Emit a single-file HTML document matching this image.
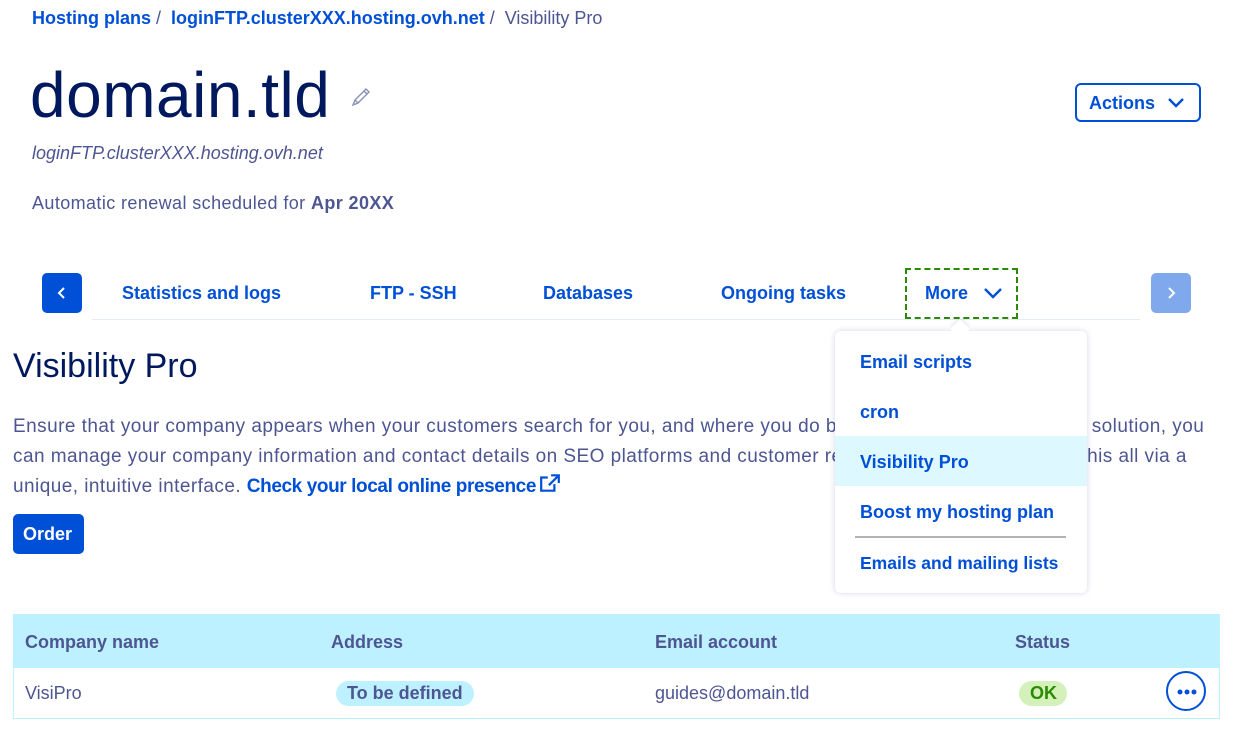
<!DOCTYPE html>
<html><head><meta charset="utf-8"><style>
*{margin:0;padding:0;box-sizing:border-box}
body{width:1233px;height:734px;background:#fff;font-family:"Liberation Sans",sans-serif;position:relative;overflow:hidden;color:#4d5592}
.a{position:absolute;white-space:nowrap}
.b{color:#0050d7;font-weight:bold}
.tab{position:absolute;top:283px;font-size:18px;font-weight:bold;color:#0050d7}
.mi{position:absolute;left:25px;font-size:18px;font-weight:bold;color:#0050d7}
.th{position:absolute;top:632px;font-size:18px;font-weight:bold;color:#4d5592}
</style></head><body>
<div class="a" style="left:32px;top:8px;font-size:18px"><span class="b">Hosting plans</span> / &nbsp;<span class="b">loginFTP.clusterXXX.hosting.ovh.net</span> / &nbsp;Visibility Pro</div>
<div class="a" style="left:30px;top:58px;font-size:64px;color:#00185e;letter-spacing:0.5px;font-weight:300">domain.tld</div>
<svg class="a" style="left:350px;top:86px" width="22" height="22" viewBox="0 0 22 22"><path d="M3 19 L5 14 L16 3 L19 6 L8 17 Z M5 14 L8 17 M14 5 L17 8" fill="none" stroke="#8a8fb8" stroke-width="1.4"/></svg>
<div class="a" style="left:32px;top:143px;font-size:18px;font-style:italic">loginFTP.clusterXXX.hosting.ovh.net</div>
<div class="a" style="left:32px;top:193px;font-size:18px;letter-spacing:0.4px">Automatic renewal scheduled for <b>Apr 20XX</b></div>
<div class="a" style="left:1075px;top:83px;width:126px;height:39px;border:2px solid #0050d7;border-radius:6px;color:#0050d7;font-weight:bold;font-size:18px;padding:8px 0 0 12px">Actions
<svg style="position:absolute;left:90px;top:12px" width="18" height="12" viewBox="0 0 18 12"><path d="M2 2 L9 9 L16 2" fill="none" stroke="#0050d7" stroke-width="2.4"/></svg></div>
<div class="a" style="left:42px;top:273px;width:40px;height:40px;background:#0050d7;border-radius:5px"><svg style="position:absolute;left:14px;top:13px" width="12" height="14"><path d="M8 2 L3 7 L8 12" fill="none" stroke="#fff" stroke-width="2"/></svg></div>
<div class="a" style="left:1151px;top:273px;width:40px;height:40px;background:#80a8ec;border-radius:5px"><svg style="position:absolute;left:14px;top:13px" width="12" height="14"><path d="M4 2 L9 7 L4 12" fill="none" stroke="#fff" stroke-width="2"/></svg></div>
<div class="a" style="left:92px;top:319px;width:1048px;height:1px;background:#e6ecf5"></div>
<div class="tab" style="left:122px">Statistics and logs</div>
<div class="tab" style="left:370px">FTP - SSH</div>
<div class="tab" style="left:543px">Databases</div>
<div class="tab" style="left:721px">Ongoing tasks</div>
<div class="a" style="left:905px;top:268px;width:113px;height:51px;border:2px dashed #2a8a00"></div>
<div class="tab" style="left:925px">More</div>
<svg class="a" style="left:983px;top:287px" width="20" height="14"><path d="M2 2 L10 10 L18 2" fill="none" stroke="#0050d7" stroke-width="2.4"/></svg>
<div class="a" style="left:13px;top:347px;font-size:34px;color:#00185e">Visibility Pro</div>
<div class="a" style="left:13px;top:412px;font-size:19px;line-height:30px;letter-spacing:0.45px">Ensure that your company appears when your customers search for you, and where you do business. With this marketing solution, you<br>can manage your company information and contact details on SEO platforms and customer review websites. You can do this all via a<br>unique, intuitive interface. <span class="b" style="letter-spacing:-0.4px">Check your local online presence</span><svg width="22" height="20" viewBox="0 0 20 18" style="vertical-align:-1px;margin-left:3px"><path d="M14 10 V16 H2 V4 H8 M11 2 H18 V9 M18 2 L9 11" fill="none" stroke="#0050d7" stroke-width="2"/></svg></div>
<div class="a" style="left:13px;top:514px;width:71px;height:40px;background:#0050d7;border-radius:5px;color:#fff;font-weight:bold;font-size:18px;padding:10px 0 0 10px">Order</div>
<div class="a" style="left:835px;top:331px;width:252px;height:262px;background:#fff;border-radius:6px;box-shadow:0 0 6px rgba(0,30,120,.18)">
<div class="mi" style="top:21px">Email scripts</div>
<div class="mi" style="top:71px">cron</div>
<div style="position:absolute;left:0;top:105px;width:252px;height:50px;background:#def8ff"></div>
<div class="mi" style="top:121px">Visibility Pro</div>
<div class="mi" style="top:171px">Boost my hosting plan</div>
<div style="position:absolute;left:20px;top:205px;width:211px;height:2px;background:#b3b3b3"></div>
<div class="mi" style="top:222px;font-size:17.5px">Emails and mailing lists</div>
</div>
<div class="a" style="left:953px;top:322px;width:14px;height:14px;background:#fff;transform:rotate(45deg);box-shadow:-2px -2px 3px rgba(0,30,120,.08)"></div>
<div class="a" style="left:13px;top:614px;width:1207px;height:105px;border:1px solid #bef1ff"></div>
<div class="a" style="left:13px;top:614px;width:1207px;height:54px;background:#bef1ff"></div>
<div class="th" style="left:25px">Company name</div>
<div class="th" style="left:331px">Address</div>
<div class="th" style="left:655px">Email account</div>
<div class="th" style="left:1015px">Status</div>
<div class="a" style="left:25px;top:683px;font-size:18px">VisiPro</div>
<div class="a" style="left:336px;top:681px;width:138px;height:25px;background:#bef1ff;border-radius:13px;font-size:18px;font-weight:bold;padding:2px 0 0 11px">To be defined</div>
<div class="a" style="left:655px;top:683px;font-size:18px">guides@domain.tld</div>
<div class="a" style="left:1019px;top:681px;width:48px;height:25px;background:#d4f1bc;border-radius:13px;font-size:18px;font-weight:bold;color:#2a8a00;padding:2px 0 0 11px">OK</div>
<div class="a" style="left:1166px;top:671px;width:40px;height:40px;border:2px solid #0050d7;border-radius:50%"><svg style="position:absolute;left:8px;top:15px" width="22" height="8"><circle cx="4" cy="4" r="2.5" fill="#0050d7"/><circle cx="11" cy="4" r="2.5" fill="#0050d7"/><circle cx="18" cy="4" r="2.5" fill="#0050d7"/></svg></div>
</body></html>
